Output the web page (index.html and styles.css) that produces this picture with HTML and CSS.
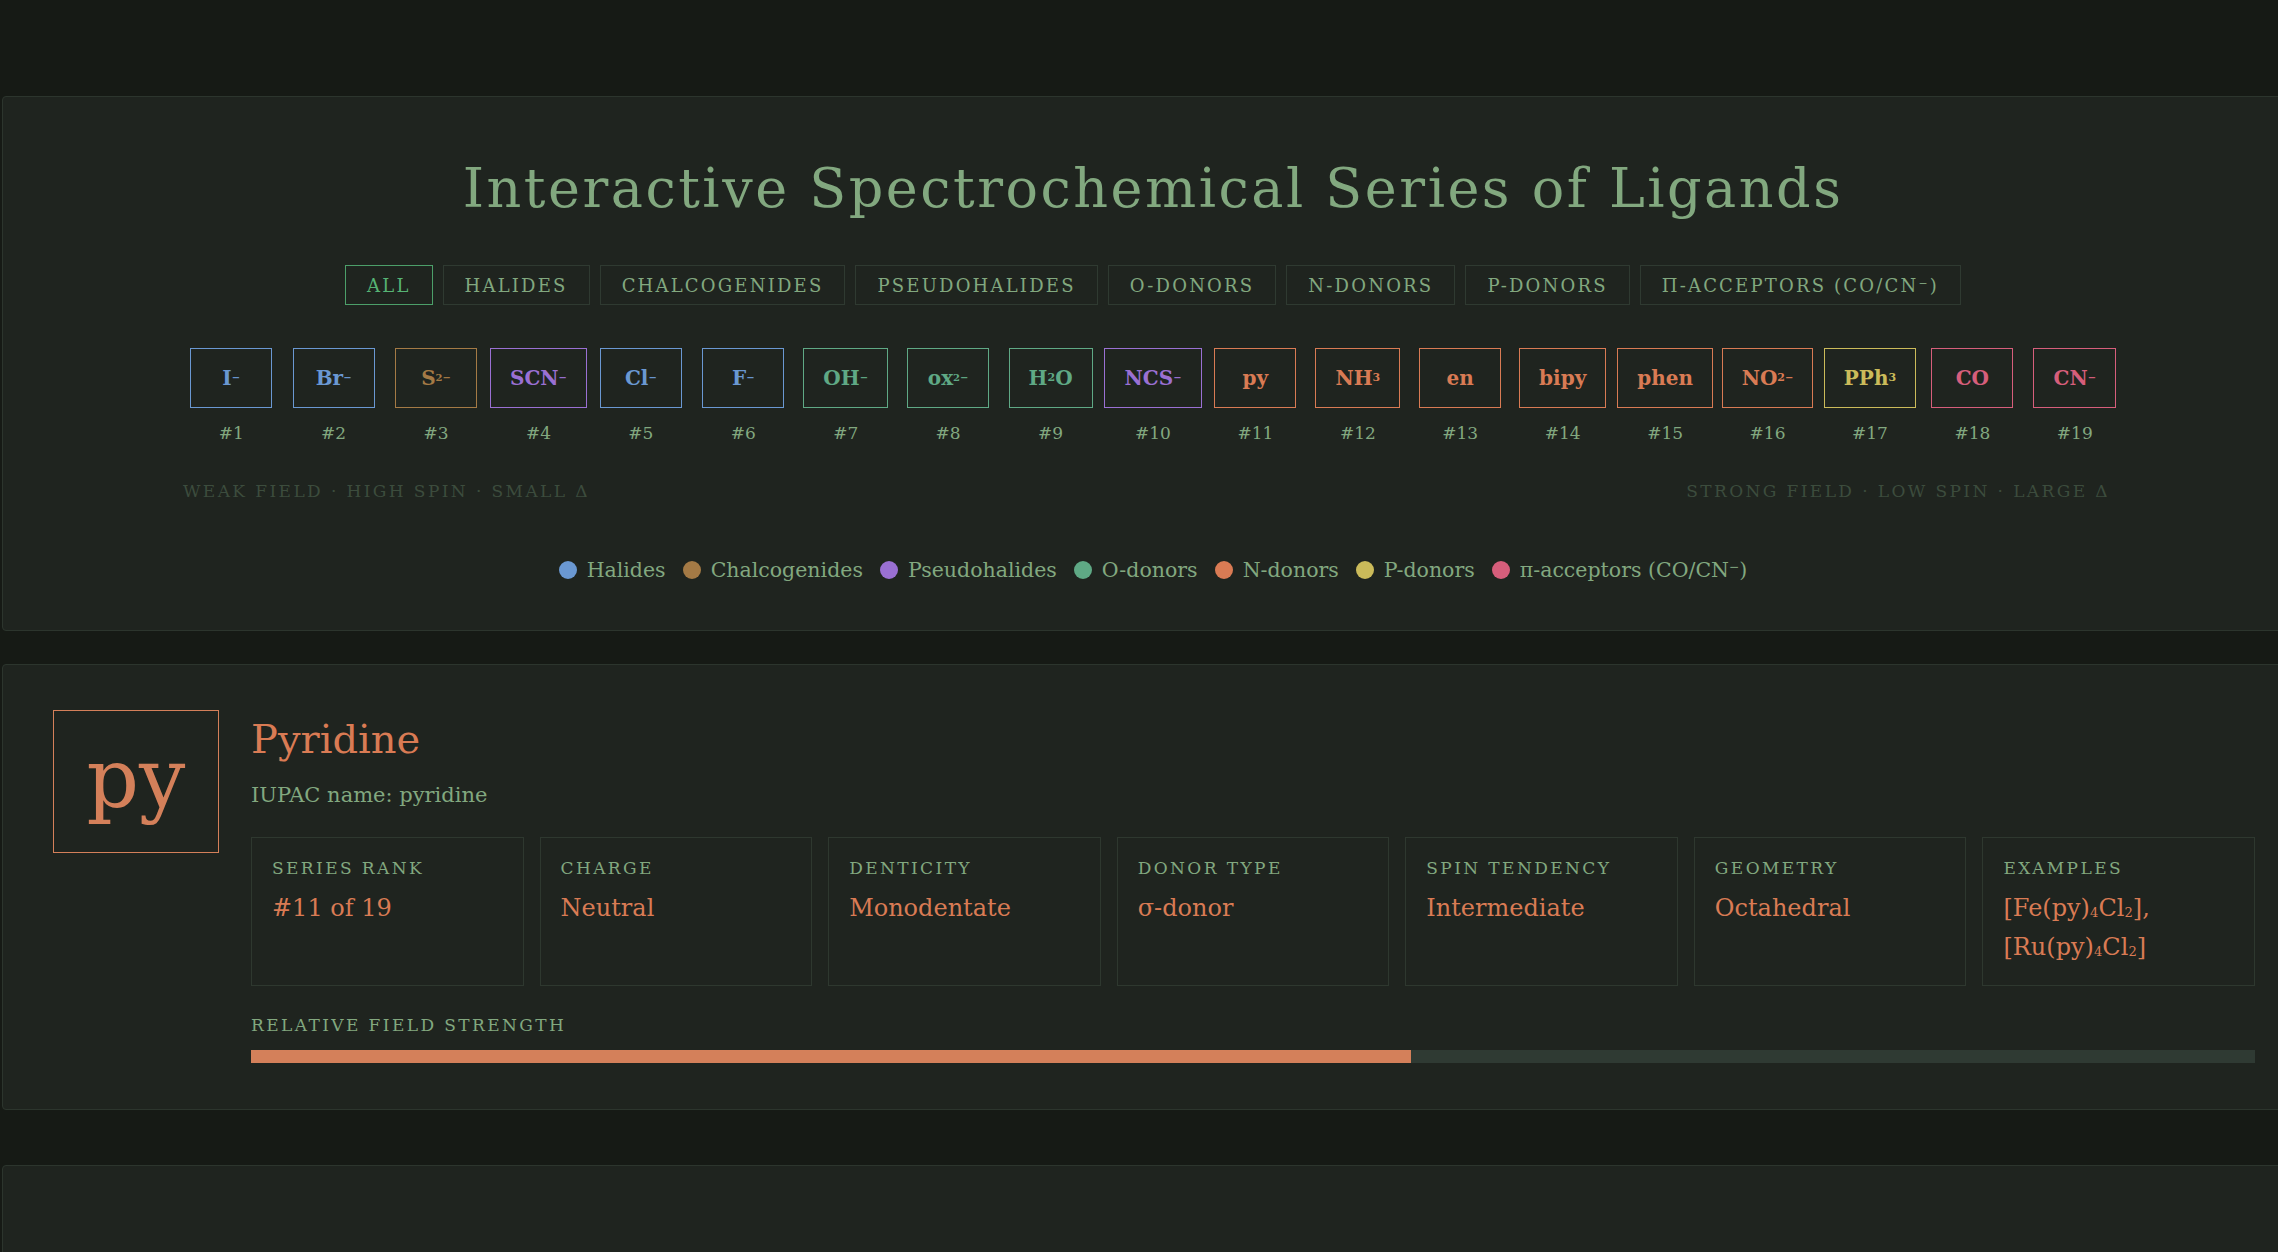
FILE: index.html
```html
<!DOCTYPE html>
<html lang="en">
<head>
<meta charset="utf-8">
<title>Interactive Spectrochemical Series of Ligands</title>
<link rel="stylesheet" href="styles.css">
</head>
<body>
<div class="page">
  <section class="card hero">
    <h1 class="title">Interactive Spectrochemical Series of Ligands</h1>
    <div class="filters">
      <button class="filter active">All</button>
      <button class="filter">Halides</button>
      <button class="filter">Chalcogenides</button>
      <button class="filter">Pseudohalides</button>
      <button class="filter">O-donors</button>
      <button class="filter">N-donors</button>
      <button class="filter">P-donors</button>
      <button class="filter">π-acceptors (CO/CN<sup>−</sup>)</button>
    </div>
    <div class="series">
      <div class="slot"><div class="chip hal">I<sup>−</sup></div><div class="rank">#1</div></div>
      <div class="slot"><div class="chip hal">Br<sup>−</sup></div><div class="rank">#2</div></div>
      <div class="slot"><div class="chip chal">S<sup>2−</sup></div><div class="rank">#3</div></div>
      <div class="slot"><div class="chip pseudo">SCN<sup>−</sup></div><div class="rank">#4</div></div>
      <div class="slot"><div class="chip hal">Cl<sup>−</sup></div><div class="rank">#5</div></div>
      <div class="slot"><div class="chip hal">F<sup>−</sup></div><div class="rank">#6</div></div>
      <div class="slot"><div class="chip odon">OH<sup>−</sup></div><div class="rank">#7</div></div>
      <div class="slot"><div class="chip odon">ox<sup>2−</sup></div><div class="rank">#8</div></div>
      <div class="slot"><div class="chip odon">H<sub>2</sub>O</div><div class="rank">#9</div></div>
      <div class="slot"><div class="chip pseudo">NCS<sup>−</sup></div><div class="rank">#10</div></div>
      <div class="slot"><div class="chip ndon">py</div><div class="rank">#11</div></div>
      <div class="slot"><div class="chip ndon">NH<sub>3</sub></div><div class="rank">#12</div></div>
      <div class="slot"><div class="chip ndon">en</div><div class="rank">#13</div></div>
      <div class="slot"><div class="chip ndon">bipy</div><div class="rank">#14</div></div>
      <div class="slot"><div class="chip ndon">phen</div><div class="rank">#15</div></div>
      <div class="slot"><div class="chip ndon">NO<sub>2</sub><sup>−</sup></div><div class="rank">#16</div></div>
      <div class="slot"><div class="chip pdon">PPh<sub>3</sub></div><div class="rank">#17</div></div>
      <div class="slot"><div class="chip pia">CO</div><div class="rank">#18</div></div>
      <div class="slot"><div class="chip pia">CN<sup>−</sup></div><div class="rank">#19</div></div>
    </div>
    <div class="scale">
      <span>Weak field · High spin · Small Δ</span>
      <span>Strong field · Low spin · Large Δ</span>
    </div>
    <div class="legend">
      <span class="key"><i class="dot hal"></i><span>Halides</span></span>
      <span class="key"><i class="dot chal"></i><span>Chalcogenides</span></span>
      <span class="key"><i class="dot pseudo"></i><span>Pseudohalides</span></span>
      <span class="key"><i class="dot odon"></i><span>O-donors</span></span>
      <span class="key"><i class="dot ndon"></i><span>N-donors</span></span>
      <span class="key"><i class="dot pdon"></i><span>P-donors</span></span>
      <span class="key"><i class="dot pia"></i><span>π-acceptors (CO/CN<sup>−</sup>)</span></span>
    </div>
  </section>

  <section class="card detail">
    <div class="symbol">py</div>
    <div class="info">
      <h2 class="name">Pyridine</h2>
      <p class="iupac">IUPAC name: pyridine</p>
      <div class="stats">
        <div class="stat"><div class="label">Series rank</div><div class="value">#11 of 19</div></div>
        <div class="stat"><div class="label">Charge</div><div class="value">Neutral</div></div>
        <div class="stat"><div class="label">Denticity</div><div class="value">Monodentate</div></div>
        <div class="stat"><div class="label">Donor type</div><div class="value">σ-donor</div></div>
        <div class="stat"><div class="label">Spin tendency</div><div class="value">Intermediate</div></div>
        <div class="stat"><div class="label">Geometry</div><div class="value">Octahedral</div></div>
        <div class="stat"><div class="label">Examples</div><div class="value">[Fe(py)<sub>4</sub>Cl<sub>2</sub>], [Ru(py)<sub>4</sub>Cl<sub>2</sub>]</div></div>
      </div>
      <div class="label field-label">Relative field strength</div>
      <div class="bar"><div class="fill" style="width: 57.89%"></div></div>
    </div>
  </section>

  <section class="card empty"></section>
</div>
</body>
</html>
```

FILE: styles.css
```css
html, body {
  margin: 0;
  padding: 0;
}
body {
  background: #161a15;
  color: #82a87f;
  font-family: "DejaVu Serif", "Liberation Serif", serif;
  overflow: hidden;
}
.page {
  width: 2302px;
  margin-left: 2px;
  padding-top: 96px;
  display: flex;
  flex-direction: column;
}
.card {
  background: #1f241f;
  border: 1px solid #2c352d;
  border-radius: 4px;
  box-sizing: border-box;
}

/* ---------- hero ---------- */
.hero {
  padding: 59px 50px 46px;
  display: flex;
  flex-direction: column;
  align-items: center;
}
.title {
  margin: 0;
  font-size: 54px;
  line-height: 65px;
  font-weight: 400;
  letter-spacing: 2.5px;
  color: #82a87f;
}
.filters {
  margin-top: 44px;
  display: flex;
  gap: 10px;
}
.filter {
  height: 40px;
  padding: 0 21px;
  background: transparent;
  border: 1px solid #2f3a31;
  color: #82a87f;
  font-family: inherit;
  font-size: 18px;
  letter-spacing: 2.2px;
  text-transform: uppercase;
}
.filter.active {
  border-color: #4c9f69;
  color: #56b374;
}
.filter sup, .legend sup {
  font-size: 0.6em;
  vertical-align: 0.5em;
  line-height: 0;
}

.series {
  margin-top: 43px;
  width: 1946px;
  display: grid;
  grid-template-columns: repeat(19, 1fr);
}
.slot {
  display: flex;
  flex-direction: column;
  align-items: center;
}
.chip {
  min-width: 82px;
  height: 60px;
  padding: 0 19px;
  box-sizing: border-box;
  border: 1px solid currentColor;
  display: flex;
  align-items: center;
  justify-content: center;
  font-size: 20px;
  font-weight: 700;
  white-space: nowrap;
}
.chip sup {
  font-size: 0.5em;
  vertical-align: 0.75em;
  line-height: 0;
}
.chip sub {
  font-size: 0.55em;
  vertical-align: -0.1em;
  line-height: 0;
}
.hal { color: #6a98d2; }
.chal { color: #a47a45; }
.pseudo { color: #9a70d3; }
.odon { color: #5fa985; }
.ndon { color: #d97b54; }
.pdon { color: #cbbb5a; }
.pia { color: #d65e7b; }

.rank {
  margin-top: 14px;
  font-size: 17px;
  line-height: 22px;
  color: #82a87f;
}

.scale {
  margin-top: 36px;
  width: 1946px;
  box-sizing: border-box;
  padding: 0 16px 0 3px;
  display: flex;
  justify-content: space-between;
  font-size: 17px;
  line-height: 22px;
  letter-spacing: 2.4px;
  text-transform: uppercase;
  color: #3c4c3d;
}

.legend {
  margin-top: 54px;
  display: flex;
  gap: 17px;
  font-size: 20.5px;
  line-height: 28px;
  color: #82a87f;
}
.key {
  display: flex;
  align-items: center;
  gap: 10px;
}
.dot {
  width: 18px;
  height: 18px;
  border-radius: 50%;
  background: currentColor;
}

/* ---------- detail ---------- */
.detail {
  margin-top: 33px;
  padding: 45px 48px 46px 50px;
  display: flex;
  align-items: flex-start;
  gap: 32px;
}
.symbol {
  flex: 0 0 auto;
  width: 166px;
  height: 143px;
  box-sizing: border-box;
  border: 1px solid #d4805a;
  display: flex;
  align-items: center;
  justify-content: center;
  font-size: 82px;
  line-height: 1;
  padding-bottom: 6px;
  color: #d4805a;
}
.info {
  flex: 1;
  min-width: 0;
}
.name {
  margin: 0;
  font-size: 40px;
  line-height: 59px;
  font-weight: 400;
  color: #d97b54;
}
.iupac {
  margin: 11px 0 0;
  font-size: 21px;
  line-height: 30px;
  color: #82a87f;
}
.stats {
  margin-top: 27px;
  display: grid;
  grid-template-columns: repeat(7, 1fr);
  gap: 16px;
}
.stat {
  border: 1px solid #2e382f;
  padding: 19px 20px 18px;
}
.label {
  font-size: 17px;
  line-height: 22px;
  letter-spacing: 2.4px;
  text-transform: uppercase;
  color: #82a87f;
}
.value {
  margin-top: 10px;
  font-size: 24px;
  line-height: 39px;
  color: #d97b54;
}
.value sub {
  font-size: 0.55em;
  line-height: 1;
  vertical-align: -0.1em;
}
.field-label {
  margin-top: 28px;
}
.bar {
  margin-top: 14px;
  height: 13px;
  background: #2f3a33;
}
.fill {
  height: 100%;
  background: #d4805a;
}

.empty {
  margin-top: 55px;
  height: 200px;
}
```
